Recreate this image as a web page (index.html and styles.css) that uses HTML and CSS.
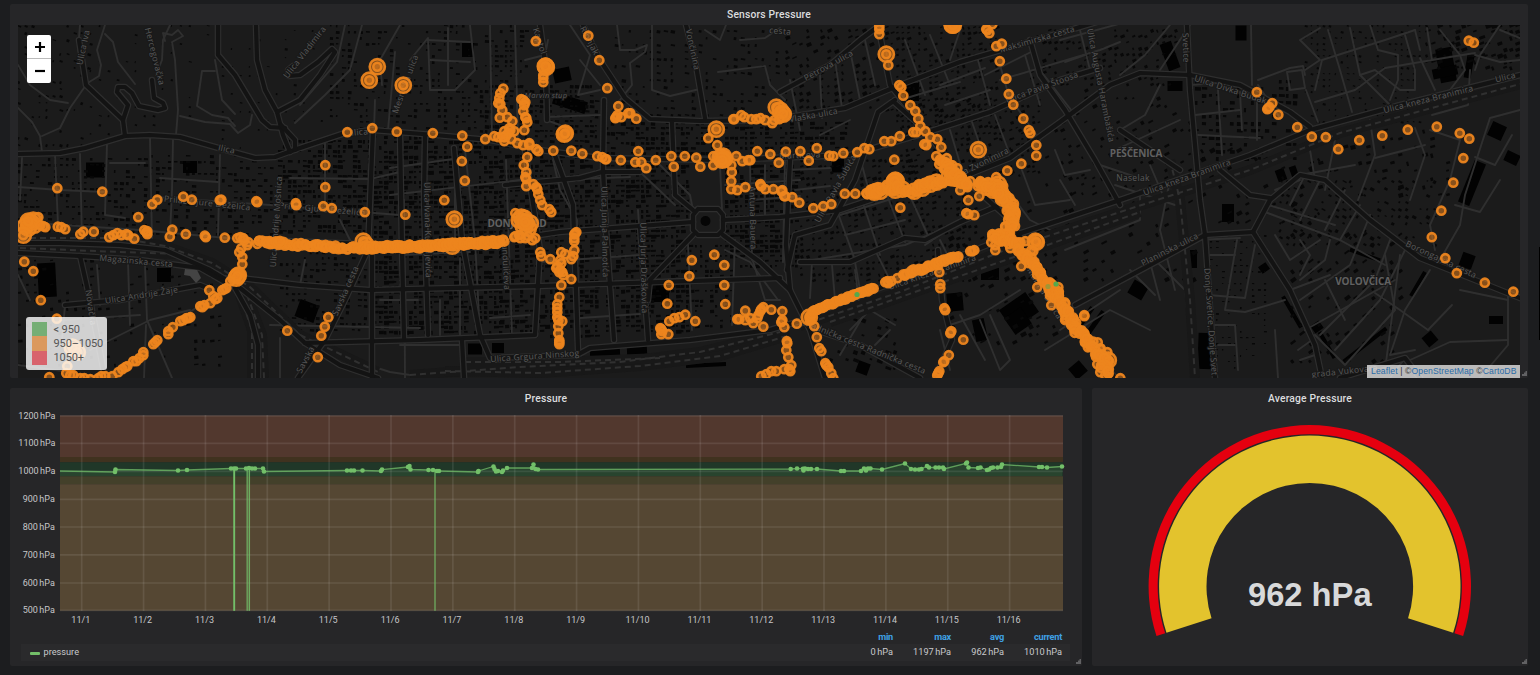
FILE: index.html
```html
<!DOCTYPE html>
<html lang="en">
<head>
<meta charset="utf-8">
<title>Sensors Pressure</title>
<link rel="stylesheet" href="styles.css">
</head>
<body>
<main class="dashboard">
  <section class="panel panel-map">
    <h2 class="panel-title">Sensors Pressure</h2>
    <div class="map">
      <svg class="map-canvas" id="map" viewBox="18 25 1502 353" width="1502" height="353"></svg>
      <div class="zoom"><span class="zoom-btn"><svg width="24" height="23" viewBox="0 0 24 23"><path d="M8 12h10M13 7v10" stroke="#000" stroke-width="2.2"/></svg></span><span class="zoom-btn"><svg width="24" height="23" viewBox="0 0 24 23"><path d="M8 12h10" stroke="#000" stroke-width="2.2"/></svg></span></div>
      <div class="map-legend">
        <div class="key"><i class="swatch low"></i>&lt; 950</div>
        <div class="key"><i class="swatch mid"></i>950–1050</div>
        <div class="key"><i class="swatch high"></i>1050+</div>
      </div>
      <div class="attribution"><a>Leaflet</a> | ©<a>OpenStreetMap</a> ©<a>CartoDB</a></div>
    </div>
    <svg class="grip" width="5" height="5"><path d="M0 5V3h2V1.500h1.500V0H5v5z"/></svg>
  </section>
  <div class="row">
    <section class="panel panel-graph">
      <h2 class="panel-title">Pressure</h2>
      <svg class="chart" id="chart" viewBox="10 408 1072 220" width="1072" height="220"></svg>
      <div class="legend">
        <div class="legend-head"><span class="name"></span><span class="c1">min</span><span class="c2">max</span><span class="c3">avg</span><span class="c4">current</span></div>
        <div class="legend-row"><span class="name"><i class="dash"></i>pressure</span><span class="c1">0 hPa</span><span class="c2">1197 hPa</span><span class="c3">962 hPa</span><span class="c4">1010 hPa</span></div>
      </div>
      <svg class="grip" width="5" height="5"><path d="M0 5V3h2V1.500h1.500V0H5v5z"/></svg>
    </section>
    <section class="panel panel-gauge">
      <h2 class="panel-title">Average Pressure</h2>
      <svg class="gauge" id="gauge" viewBox="1092 408 436 250" width="436" height="250"></svg>
      <svg class="grip" width="5" height="5"><path d="M0 5V3h2V1.500h1.500V0H5v5z"/></svg>
    </section>
  </div>
</main>
<div class="scroll-thumb"></div>
<script src="app.js"></script>
</body>
</html>
```

FILE: styles.css
```css
* { box-sizing: border-box; }
body {
  margin: 0;
  height: 675px;
  overflow: hidden;
  background: #1c1d1f;
  color: #d0d1d3;
  font-family: Roboto, "Liberation Sans", sans-serif;
}
.dashboard { padding: 4px 12px 0 10px; display: flex; flex-direction: column; gap: 10px; }
.row { display: grid; grid-template-columns: 1072px 436px; gap: 10px; }
.panel { position: relative; background: #262628; border-radius: 2px; }
.panel-map { height: 374px; padding: 0 8px; }
.panel-graph, .panel-gauge { height: 278px; }
.panel-title {
  margin: 0;
  height: 21px;
  line-height: 21px;
  font-size: 10.300px;
  font-weight: 500;
  letter-spacing: .18px;
  text-align: center;
  color: #dcdddf;
}
.panel-graph .panel-title, .panel-gauge .panel-title { height: 20px; }
.grip { position: absolute; right: 1px; bottom: 2px; fill: #616163; }

.map { position: relative; height: 353px; background: #1b1b1b; overflow: hidden; }
.map-canvas { display: block; }
.zoom {
  position: absolute;
  left: 9px;
  top: 10px;
  width: 24px;
  height: 48px;
  background: #fff;
  border-radius: 2px;
  display: flex;
  flex-direction: column;
}
.zoom-btn { height: 24px; }
.zoom-btn:first-child { border-bottom: 1px solid #bbb; }
.map-legend {
  position: absolute;
  left: 8px;
  bottom: 8px;
  width: 81px;
  height: 53px;
  padding: 5px 0 5px 6px;
  border-radius: 3px;
  background: rgba(255, 255, 255, .8);
  font-size: 11px;
  letter-spacing: -.1px;
  color: #555;
}
.key { display: flex; align-items: center; gap: 6.500px; height: 14.300px; white-space: nowrap; }
.swatch { flex: none; width: 15px; height: 14.300px; opacity: .7; }
.low { background: #4fa04f; }
.mid { background: #e0812c; }
.high { background: #dc3442; }
.attribution {
  position: absolute;
  right: 0;
  bottom: 0;
  width: 153px;
  height: 13px;
  line-height: 12px;
  padding-left: 4px;
  background: rgba(255, 255, 255, .7);
  color: #333;
  font-family: "Liberation Sans", sans-serif;
  font-size: 8.600px;
  letter-spacing: .12px;
  white-space: nowrap;
}
.attribution a { color: #2a6ba8; }
.road-casing, .road-core, .road-minor, .rail { fill: none; stroke-linejoin: round; stroke-linecap: round; }
.road-minor { stroke: #2f2f2f; stroke-width: 1.900; }
.road-casing { stroke: #2e2e2e; stroke-width: 6.600; }
.road-core { stroke: #131313; stroke-width: 4.200; }
.rail-bed { fill: none; stroke: #181818; stroke-width: 10; }
.rail { stroke: #303030; stroke-width: 2; stroke-dasharray: 6 4; stroke-linecap: butt; }
.building { fill: #080808; }
.block { fill: #020202; }
.street {
  font: 8.500px "Open Sans", "DejaVu Sans", sans-serif;
  letter-spacing: .3px;
  fill: #5a5a5a;
  stroke: #181818;
  stroke-width: 2;
  paint-order: stroke;
  text-anchor: middle;
}
.district { font-weight: 700; font-size: 10px; fill: #616161; letter-spacing: -.2px; }
.poi { font-style: italic; font-size: 7.500px; }
.sensor { fill: #ed851e; fill-opacity: .52; stroke: #ed851e; stroke-opacity: .94; stroke-width: 2.600; }
.sensor-low { fill: #55a84c; }

.chart, .gauge { display: block; }
.grid { stroke: #fff; stroke-opacity: .09; stroke-width: 1.700; }
.axis { font-size: 9px; fill: #c6c7c9; }
.axis-y { text-anchor: end; word-spacing: -.8px; }
.axis-x { text-anchor: middle; }
.series { fill: none; stroke: #73bf69; stroke-width: 1.300; stroke-opacity: .75; }
.series-area { fill: #73bf69; fill-opacity: .1; }
.point { fill: #73bf69; }
.legend { padding: 0 12px 0 11px; font-size: 9.200px; }
.legend-head, .legend-row { display: flex; text-align: right; padding-right: 8px; }
.legend-head { height: 16px; line-height: 17px; color: #3fa0e4; font-weight: 700; letter-spacing: -.25px; }
.legend-row { height: 17px; line-height: 16px; background: #2a2a2c; color: #c8c9cb; word-spacing: -.8px; }
.name { flex: 1; display: flex; align-items: center; gap: 3.500px; height: 15px; padding-left: 9px; text-align: left; }
.dash { width: 10px; height: 3px; margin-top: 3px; border-radius: 1px; background: #73bf69; }
.c1 { margin-right: 1px; }
.c2 { width: 57px; }
.c3 { width: 53px; }
.c4 { width: 58px; }
.gauge-value { font: 700 32.700px "Liberation Sans", sans-serif; fill: #d8d9da; text-anchor: middle; }
.scroll-thumb { position: absolute; right: 0; top: 247px; width: 1px; height: 93px; background: #000; }
```

FILE: app.js
```js
const el = (cls, tag, attrs, text) => {
  const a = Object.entries(attrs).map(([k, v]) => `${k}="${v}"`).join(' ');
  return `<${tag} class="${cls}" ${a}>${text || ''}</${tag}>`;
};
let seed = 7;
const rnd = () => (seed = (seed * 16807) % 2147483647) / 2147483647;

/* ---------- base map ---------- */
// x0, y0, x1, y1, rotation, grid step, density, building size
const quarters = [
  [18, 25, 90, 150, 20, 7, .35, 2.5], [90, 25, 215, 135, 15, 9, .3, 2], [222, 30, 330, 150, 10, 9, .3, 2],
  [330, 25, 480, 128, 3, 6, .4, 2.8], [480, 85, 600, 150, 5, 5, .6, 3.2], [485, 25, 530, 90, 3, 5, .5, 3],
  [615, 30, 780, 118, 10, 7, .4, 3],
  [18, 158, 150, 235, 2, 6, .5, 3], [150, 155, 272, 235, 2, 6, .5, 3.2], [278, 140, 372, 235, 2, 5, .6, 3.6],
  [374, 136, 500, 335, -2, 5, .68, 3.6], [500, 155, 600, 340, -3, 5, .65, 3.6], [606, 165, 690, 335, -3, 5, .65, 3.6],
  [725, 165, 800, 270, -2, 5, .6, 3.6], [690, 245, 735, 330, -3, 5, .4, 3],
  [606, 122, 720, 156, 4, 5, .6, 3.4], [725, 122, 850, 150, -3, 5, .6, 3.4],
  [18, 260, 220, 370, -8, 8, .3, 3], [280, 245, 370, 330, 5, 6, .5, 3],
  [785, 30, 880, 110, -25, 7, .55, 3.4], [885, 27, 1000, 130, -19, 5.5, .55, 2.8], [900, 100, 1040, 175, -19, 5.5, .45, 2.8],
  [1030, 30, 1180, 90, -22, 6, .5, 3], [1060, 90, 1190, 215, -28, 8, .35, 3.5], [800, 160, 980, 285, -19, 6, .6, 3],
  [940, 230, 1060, 350, -28, 8, .3, 4], [1000, 130, 1090, 220, -25, 9, .3, 3], [830, 310, 900, 370, 20, 8, .3, 4],
  [1065, 225, 1200, 280, -28, 9, .35, 4], [1195, 80, 1300, 160, 2, 7, .5, 4], [1305, 25, 1420, 125, 15, 6, .45, 2],
  [1425, 25, 1520, 70, -20, 6, .5, 4], [1200, 150, 1320, 230, -28, 9, .35, 4], [1210, 235, 1270, 370, 2, 6, .4, 2],
  [1280, 180, 1440, 250, 28, 7, .5, 3], [1290, 235, 1400, 370, -36, 9, .45, 4], [1310, 130, 1450, 200, -15, 8, .35, 4],
];
let buildings = '';
for (const [x0, y0, x1, y1, rot, step, density, size] of quarters) {
  for (let y = y0; y < y1; y += step) {
    for (let x = x0; x < x1; x += step) {
      if (rnd() > density) continue;
      const w = size * (.5 + rnd()), h = size * (.4 + rnd() * .7);
      buildings += el('building', 'rect', { x: x.toFixed(1), y: y.toFixed(1), width: w.toFixed(1), height: h.toFixed(1), transform: `rotate(${rot} ${x} ${y})` });
    }
  }
}
// cx, cy, w, h, rotation
const blocks = [
  [47, 280, 18, 34, -3], [164, 275, 14, 14, 0], [307, 311, 20, 18, 20], [1241, 33, 11, 15, 0], [1170, 56, 12, 28, -20],
  [1175, 86, 15, 10, 0], [1019, 311, 32, 24, -35], [1018, 321, 20, 20, -35], [955, 302, 16, 18, -5], [980, 330, 12, 22, -12],
  [1078, 370, 14, 14, -40], [1138, 290, 16, 15, 30], [605, 353, 30, 9, -3], [637, 351, 20, 10, -3], [475, 349, 14, 11, 0],
  [498, 348, 12, 10, 0], [706, 365, 40, 4, -3], [660, 292, 18, 20, 0], [190, 167, 14, 12, 0], [95, 170, 18, 15, 0],
  [468, 50, 12, 14, 0], [562, 75, 17, 14, -12], [570, 103, 34, 12, 18], [1228, 213, 12, 18, 0], [1190, 259, 14, 18, 0],
  [1472, 183, 12, 45, 22], [1497, 131, 15, 15, 25], [1512, 158, 14, 11, 25], [1467, 261, 13, 15, 20], [1496, 320, 14, 8, 0],
  [1430, 339, 12, 12, -40], [1281, 175, 9, 12, -20], [1294, 172, 7, 12, -20], [1205, 351, 14, 36, 2], [1446, 65, 16, 34, -10],
  [1445, 72, 25, 10, -12], [1469, 67, 7, 22, 10], [1264, 268, 9, 8, -35], [1317, 327, 10, 9, -35], [990, 274, 18, 12, 0],
  [1085, 318, 5, 26, 35], [1096, 322, 5, 26, 35], [863, 368, 12, 12, 20], [912, 92, 14, 18, 0], [838, 165, 12, 15, 0],
  [1365, 345, 54, 4, -38], [1365, 255, 32, 4, 20], [1292, 312, 4, 36, -30], [1327, 345, 4, 30, -30], [1418, 284, 4, 28, 30],
];
let blockShapes = blocks.map(([x, y, w, h, r]) => el('block', 'rect', { x: x - w / 2, y: y - h / 2, width: w, height: h, transform: `rotate(${r} ${x} ${y})` })).join('');

const minor = [
  '18,108 32,122 40,136 42,152', '42,136 60,128 70,108 86,85', '86,84 99,76 101,65 97,50 105,25', '18,65 30,85 50,100 68,103',
  '80,25 78,50 81,60', '105,34 113,42 118,62 135,84', '170,25 163,40 162,60 156,75', '165,41 163,33 172,35 178,30 183,36 172,42 175,60 178,110 176,135',
  '180,116 205,122 230,124 238,133 250,125 252,115', '215,71 202,71 197,106 212,115 228,118 235,126', '215,60 222,100 235,114',
  '295,123 325,95 350,70 362,25', '345,25 337,62 300,105', '22,158 20,200', '55,155 58,225', '80,154 82,240', '107,143 105,215 125,218',
  '18,187 60,190 105,192', '18,222 140,230 270,242', '150,137 152,240', '173,140 172,190 170,235', '220,155 218,235', '325,140 325,205',
  '160,178 218,182', '155,197 270,205 400,215', '290,178 370,179 400,172', '110,163 145,163', '65,305 62,340', '97,265 100,305', '128,262 130,325',
  '145,265 147,320 172,378', '62,320 140,315', '90,350 150,320 190,310', '146,325 144,378', '190,312 240,278', '375,100 373,160', '395,52 388,130',
  '382,85 380,60 400,25', '410,60 428,38 430,90 455,90 475,70 470,25', '427,40 470,42', '448,28 448,85', '430,60 470,62', '490,25 492,140', '515,25 518,140',
  '525,60 545,55 548,40', '545,85 546,120 560,125', '545,117 600,115', '570,25 590,55 578,95 600,90', '580,60 600,85', '617,25 620,50 635,50 647,45 645,52 630,63 632,85 620,100',
  '652,25 652,90 670,96 700,89', '705,30 720,40 726,25', '718,72 765,66 770,85 785,100', '740,40 765,38 780,28', '455,150 455,240', '465,150 475,240 480,335',
  '506,160 512,335', '390,168 460,158', '390,195 520,180', '404,200 405,378', '428,200 428,335', '390,250 535,235', '540,180 630,177', '553,160 560,190 577,220 578,345', '605,170 614,340',
  '638,210 647,340', '560,232 640,224', '540,262 640,255', '580,318 640,314', '400,255 470,252', '460,258 460,335', '490,318 530,315', '660,165 690,195 693,210',
  '640,172 675,205', '688,245 692,330', '660,280 730,278', '735,240 732,325', '750,160 752,260', '765,165 765,220', '720,165 722,210', '725,185 800,180', '753,200 800,196',
  '785,160 783,262', '725,250 750,262 778,300', '752,258 765,300 780,300', '820,75 822,118', '790,80 800,130', '835,60 842,108', '850,50 860,100', '865,40 875,85', '905,40 925,95', '930,35 948,80',
  '950,60 960,30', '978,60 990,105', '940,85 985,68', '945,105 990,90', '985,75 1035,50', '1000,80 1100,50 1120,42', '1000,65 1010,100', '1025,55 1040,105', '1040,70 1075,115', '900,100 960,82',
  '935,130 990,112', '950,130 965,180', '972,122 988,168', '995,115 1010,155', '1015,105 1040,140', '1080,30 1090,70', '1060,40 1170,10', '1065,62 1085,55', '820,135 850,120', '825,160 880,145',
  '790,170 830,168', '795,190 830,186', '840,215 920,190', '862,165 870,195', '845,235 905,220', '835,205 855,260', '862,200 880,255', '885,190 905,242', '905,185 930,240', '800,262 905,245 1000,205',
  '812,262 810,298', '832,265 835,300', '855,262 860,290', '875,250 890,280', '940,240 955,270', '925,245 955,225', '960,215 985,210', '1000,180 1030,220 1050,230', '1020,165 1035,205 1070,200', '1055,150 1065,175 1090,170',
  '1060,180 1075,205', '950,325 980,315 1020,290', '960,315 985,360', '980,320 1000,370 1010,360 990,315', '940,330 950,370', '850,330 870,310 895,325', '840,355 862,318', '875,345 890,330', '860,310 855,270',
  '1060,330 1120,290', '1045,350 1110,310 1150,330', '1130,270 1155,295', '1150,262 1160,300', '1170,25 1145,55 1120,75', '1190,25 1160,70', '1120,130 1145,115 1160,85', '1115,150 1180,120', '1100,165 1145,180', '1150,165 1165,200', '1115,185 1175,205',
  '1065,250 1140,220 1140,190', '1190,85 1230,82', '1195,115 1240,110', '1198,135 1260,138', '1218,90 1222,155', '1240,92 1242,130', '1257,97 1257,140', '1252,85 1251,25', '1258,80 1290,68 1303,66 1305,75',
  '1287,72 1302,70 1305,88 1290,90 1287,72', '1258,85 1280,118', '1305,70 1320,60 1300,40 1320,28', '1306,90 1318,122', '1315,90 1322,60 1385,40 1415,30', '1328,30 1340,70 1352,112', '1350,28 1360,75 1390,105', '1370,25 1378,50 1398,55 1398,80 1390,100', '1405,35 1415,70 1415,90 1400,90 1375,70 1360,75',
  '1315,102 1355,90 1385,68 1450,57 1475,53', '1427,28 1432,60', '1440,30 1460,55 1465,70 1450,90', '1415,30 1420,50', '1420,58 1435,90', '1500,25 1480,55 1475,70', '1475,55 1500,62 1520,60', '1500,30 1520,38',
  '1310,150 1315,180', '1335,140 1325,190', '1370,120 1375,155 1358,200', '1355,165 1300,175', '1375,158 1425,145', '1415,128 1425,155 1410,200', '1432,115 1468,105 1470,70', '1430,130 1460,140 1450,180 1430,225 1435,250', '1520,110 1490,118 1465,195 1460,225 1440,260',
  '1475,157 1495,165 1512,135', '1455,205 1480,212 1500,180', '1300,180 1275,190', '1265,212 1340,240 1385,265', '1268,205 1335,225', '1305,175 1290,205', '1320,180 1300,220', '1345,190 1325,230', '1360,205 1340,240', '1370,215 1350,265 1300,300', '1390,240 1375,280 1320,335',
  '1405,250 1380,300 1335,350', '1300,240 1310,255 1300,275', '1275,235 1290,260 1320,240', '1330,240 1325,260 1300,280', '1290,290 1330,275', '1305,330 1395,280', '1315,335 1345,365 1395,310', '1325,280 1345,320', '1375,293 1400,310 1428,330 1452,305', '1385,255 1395,310',
  '1400,255 1385,370', '1430,270 1405,310 1390,355 1415,350', '1508,295 1508,345 1480,378', '1410,360 1450,342 1508,340', '1390,378 1405,358 1415,370', '1195,240 1240,238', '1210,255 1235,255', '1208,295 1245,298 1255,245', '1237,240 1225,310 1245,312',
  '1245,312 1285,300', '1215,325 1235,325 1238,370', '1218,345 1235,345', '1298,350 1312,340', '1300,360 1315,355', '1275,330 1278,378', '1155,260 1185,290 1190,340', '1170,180 1160,230 1175,290', '18,365 70,372', '270,325 420,328', '18,275 30,300',
  '400,345 460,345', '280,338 280,378', '305,345 390,372 430,378', '305,260 300,285', '340,220 355,250', '380,300 418,300', '440,300 440,335', '1460,290 1508,300',
];
const major = [
  '18,154 60,153 85,148 125,136 150,135 180,137 215,147 255,158 275,157 300,148 345,133 372,130 435,135 490,140 540,150 600,158 720,160 850,155 925,133 990,112 1060,80 1100,68',
  '218,25 218,55 235,75 262,120 270,127 285,128', '256,25 257,60 265,90 277,112 283,135 290,152', '277,112 300,100 320,75 335,52 332,49 318,62 300,75 289,76 288,70 293,66', '281,125 295,140 295,150',
  '79,40 86,85 123,120 128,105 117,92 118,87 125,87 132,93 139,106 158,110 165,108 163,103 154,98 152,80', '123,120 125,136',
  '18,243 60,243 120,245 165,250 210,270 240,288 280,320 305,343 340,365 378,378', '18,253 80,256 140,260 200,268 230,285',
  '240,278 300,285 370,290 540,286 780,278', '65,305 120,300 200,285 212,290', '80,256 90,300 105,378', '235,288 250,315 258,345 258,378', '373,130 368,250 345,300 325,340 298,378',
  '305,343 420,340 535,335 540,250 525,150', '260,240 420,246 520,238 560,232 640,226 693,222', '425,135 424,200 428,335', '400,135 402,250 404,338', '454,148 462,240 480,335', '505,185 580,178 602,172 640,172', '553,150 573,205 578,350', '604,100 603,170 606,230 614,340', '640,226 648,340',
  '480,335 490,358 577,355 590,348 690,340 770,330 810,318', '372,250 372,378', '462,340 464,378', '583,25 600,60 625,98 650,119 700,121 770,120 845,108 900,85 960,62 1060,33 1130,12', '540,25 546,70 547,120', '686,25 695,60 705,118', '672,122 675,195 693,210',
  '698,209 718,209 723,215 723,230 718,235 698,235 693,230 693,215 698,209', '693,235 650,280 648,300', '723,235 760,262 790,290', '723,220 780,217 840,210 900,190 960,178 1010,158 1060,122 1110,85 1140,73 1190,75',
  '780,92 830,65 860,40 880,25', '1030,40 1040,75 1065,110 1095,160 1120,205', '787,270 795,235 830,225 855,180 878,112 895,100', '878,25 890,85 930,135 960,180', '790,160 788,200 786,245 790,290 810,330 825,378',
  '800,262 850,262 905,238 925,240 960,222 1000,205', '895,103 925,130 960,175 1010,220 1040,270 1075,325 1115,378', '810,315 900,280 1000,240 1120,200 1250,155 1310,130 1400,105 1520,75', '1187,25 1190,90 1200,200 1205,235 1215,378',
  '1190,75 1240,85 1290,112 1310,127', '1075,305 1150,265 1205,235 1253,232', '1253,232 1270,200 1300,175 1325,180 1370,220 1420,258 1500,290 1520,298', '1253,232 1290,290 1315,345 1322,378', '810,328 860,345 920,378', '938,250 942,300 952,340 935,378', '1220,170 1250,195 1270,198', '1340,378 1405,358 1420,378', '1120,130 1180,170',
];
const rails = ['20,238 120,238 165,246 212,263 250,287 300,335 378,372', '20,248 120,252 180,254 230,278', '800,326 900,292 1000,252 1120,212 1250,170 1340,133 1520,84', '830,322 1000,262 1140,212', '410,375 520,367 620,362 700,352 780,332', '445,371 540,373 640,366 720,356 790,335', '465,362 560,362 660,358', '240,295 252,330 252,378', '247,295 262,335 264,378', '1170,160 1180,200 1190,300 1195,378'];
const line = (cls, pts) => el(cls, 'polyline', { points: pts });

const labels = [
  ['Ilica', 226, 152, 12], ['Ilica', 360, 135, -5], ['Ulica Iva', 86, 48, -78], ['Hercegovačka', 152, 57, 76], ['Ulica Vladimira', 307, 54, -52], ['Mesnička ulica', 408, 85, -70],
  ['Magazinska cesta', 136, 264, 5], ['Ulica Andrije Žaje', 142, 298, -9], ['Prilaz Gjure Deželića', 207, 206, 6], ['Prilaz Gjure Deželića', 322, 212, 5], ['Ulica Andrije Mošnica', 279, 222, -86],
  ['Savska cesta', 348, 292, -66], ['Savska', 308, 361, -62], ['Novačka', 88, 308, 82], ['Kaptol', 537, 42, 72], ['Ribnjak', 587, 42, 62], ['Vončinina', 690, 50, 78], ['cesta', 780, 34, 5],
  ['Petrova ulica', 830, 68, -29], ['Vlaška ulica', 814, 118, -10], ['Maksimirska cesta', 1038, 42, -16], ['Ulica Pavla Štoosa', 1043, 90, -20], ['Ulica Augusta Harambašića', 1098, 86, 79], ['Kneza Zvonimira', 978, 168, -26],
  ['Ulica Pavla Šubića', 838, 190, -61], ['Ulica kneza Branimira', 1188, 180, -20], ['Ulica kneza Branimira', 933, 275, -19], ['Ulica kneza Branimira', 1429, 102, -14], ['Ulica Divka Budaka', 1232, 93, 18], ['Svetice', 1183, 48, 88], ['Planinska ulica', 1171, 252, -27],
  ['Borongajska cesta', 1440, 262, 25], ['Donje Svetice, Donje Svet', 1208, 322, 86], ['Radnička cesta Radnička cesta', 865, 350, 22], ['Ulica', 1506, 80, -14], ['grada Vukovara', 1345, 374, -6],
  ['Ulica Junija Palmotića', 602, 232, 89], ['Ulica Jurja Draškovića', 641, 268, 89], ['Gundulićeva', 503, 264, 87], ['Ulica Ivana Kukuljevića', 425, 230, 89], ['Antuna Bauera', 750, 218, 89], ['Ulica Grgura Ninskog', 535, 359, -4], ['Ulica Marina Držića', 1036, 285, 58],
  ['Martićeva', 800, 158, -2], ['Naselak', 1133, 181, 0],
];
let map = blockShapes + buildings;
map += minor.map(p => line('road-minor', p)).join('');
map += rails.map(p => line('rail-bed', p)).join('') + rails.map(p => line('rail', p)).join('');
map += major.map(p => line('road-casing', p)).join('') + major.map(p => line('road-core', p)).join('');
map += '<circle cx="705.500" cy="221" r="5" fill="#050505"/><path d="M185 269l12 1 4 8-5 5-6-7-6-1z" fill="#444"/>';
map += labels.map(([t, x, y, r]) => el('street', 'text', { x, y, transform: `rotate(${r} ${x} ${y})` }, t)).join('');
map += [['PEŠČENICA', 1136, 157], ['VOLOVČICA', 1363, 284.5], ['DONJI GRAD', 517, 227]].map(([t, x, y]) => el('street district', 'text', { x, y }, t)).join('');
map += el('street poi', 'text', { x: 546, y: 98 }, 'Marvin stup');

/* ---------- sensors ---------- */
const small = `347,132 372,128 396.500,131.500 325,165 325,187 57,188 102,191.500 157,199.500 152,204 183,196.500 191.500,199.500 219.500,200 221,199.500 256,201 257,202 295.500,203 296,205 323,206 331.500,208 364.500,212 138,217
38,217 43,226 45,227 40,225 57.500,226.500 61,227 65,229 80,234 83,231.500 93.500,231.500 109,237 113,235 117,233 121,235 126,234 128,235 134,238.500 144,230 147,231 147,234 146,232 172,229.500 169.500,236.500 185.500,234 204.500,235.500 205.500,237 224.500,237.500 237,238 240,237 244,240 248,242 247,245 243,238
241,248 239,252 242,257 242,264 230,281 224,289 222,290 226,288 209,290 213,296 215,299 210,303 217,298 202,307 200,306 204,305 190,317 186,318 183,320 188,318 180,321 172.500,327 168,334 168,331 157,340 153,344 155,342 143,355 139,358 143,352 136,361 133,361 127,366 125,367 122,369 118,372 112,376 105,376 101,376 98,378 90,379 84,378 80,378 70,375 66,373 73,375 49,377
24,261.500 33,271 40.500,300 56.500,318.500 67,366 287,330.500 317.500,357 321,335.500 324.500,326.500 328,317
535.500,41 588,35.500 599,60 607,88 618,106 616,117 617,115 615,118 621,117 628,113 630,113 636,118.500 543,78 543,82 543,75 503,88.500 500,93 499,98 500,104 502,110 499.500,117.500 507,117 512,121 498,103 509,128 514,131 504,131 521,99 523,100 525,102 524,105 523,111 526,118 527,122 525,117 524,130 485,139 494,136 498,137 505,137 511,139 517,143 523,145 529,145 536,149 538,151 504,141 508,133 506,135 510,130 503,137 529,143
432.500,133 462,135.500 467,146.500 461.500,161 464.500,180.500 444,200 527,157 523.500,165 526,172 526,179 526,186 533,184 525,177 537,189 538,194 540,200 542,205 549,209 551,212 536,187
553,150.500 571,150.500 582,153.500 597,156 602,157 605,159 606,159 620.500,160 638,151 635,162 641,162 646,168 655.500,160 671,156 673.500,166.500 684.500,156 696,157.500 700,166.500 713,156 713,165 708,138 717,145 736,156 742,161 750,160 748,160 757,151 770,154 785.500,151.500 778.500,162.500 731,165 731.500,172 731,181 731,189 737,190 745,187 760,184 761,186 765,189 773,189 781,191 785,196
734,119 733,119 741,115 744,117 751,119 756,119 760,118 765,120 772,123 774,120 779,119 405,214.500 515,213 515,236 520,238 525,238 532,240 535,238 514,237 519,235 528,236 540,252 541,256 550,259 561,252 565,254 574,250 573,256 571,259 574,234 576,232 575,233 574,241 574,238 560,260 557,266 559,272 561,263 560,270 556,268 563,275 562,272 571,279 561,285 559,297 557,304 557,312 558,320 558,326 562,321 557,308 557,317 558,333 559,340 559,344 559,342
691.500,260 689,276 714,254.500 724,265 724,285 725,304 668.500,285 667,303.500 685,314.500 679,317 674,318 669,321 695,321 661,329 660,328 662,331 661,334 668,334 739,319 745,320 745,310.500 737,319 750,318 753,323 757,318 758,315 760,311 763,307 761,309 771,309.500 782,311 782,320 784,327 781,322 763,326.500 786.500,341 786,350 788,357 791,365 789,369 784,369 776,371 771,371 766,374 761,376 787,343 790,371
879,29 879,34 888,65 986,29 989,33 987,30 992,24 879,26 1001.500,43.500 996,46 999.500,61 1006,78.500 1008.500,94 1013,104.500 1023,118.500 1028.500,130 1030,133 1036,145 1036,155.500 1021,163.500 1007,170.500 996,177 899,85 901,87 903,95.500 910,105 915,111 918,118.500 920,126 925,131 930,137 937,139 941,147 936,156 946.500,158 939,164 913,132 916,132 899.500,136 891,141 884,141 924,144 926,145 869,149 864,148 857,152 843,153 833,156 829,155.500 816.500,148 808.500,160.500 800,151 894,159.500
844.500,193.500 855,193.500 866,193 870,193 949,164 951,168 955,172 962,178 966,182 970,181 980,181 981,184 960,190 968,200 979,196 945,168 952,165 957,168 782,190 792,197 799,202.500 784,196 813,208 823,206 831,204 900,207.500 968,214 974,215 966,213 967,187
992,234 997,238 1002,240 1010,240 991,242 995,245 995,250 1010,248 1018,248 1025,241 1031,250 1033,251 1022,254 1026,260 1021,266 1033,265 1038,270 1042,278 1036,269 1040,272 1037,287 1047,285 1058,287 1056,295 1051,305 1058,298 1084,316 1084,315 1097,364 1100,372 1105,375 1108,373 1120,378 1107,352 1037,267 1044,282 1050,291
939,272 940,284 940,288 944,308 945,310 951,331 950,333 963,339.500 948.500,355 943,362 944,361 939,371 937,375 938,373 814,326 816.500,337 819,348 821,351 825,363 828,367 826,365 831,373 833,378 796.500,323.500 885,282 887,281 891,281 897,278 888,283 970,251 974,250 972,251
1256.500,92 1272,103 1268,108 1267,109 1269,107 1278,114.500 1297,127 1311.500,136.500 1325.500,137 1338,149 1359,140 1382,135.500 1407.500,129.500 1436.500,126.500 1459.500,133 1469,138.500 1463,158 1453,182.500 1468.500,40.500 1473.500,42.500 1441,210.500 1431.500,237 1445,258 1456.500,273 1484.500,282.500 1513,291.500`;
const large = `377,66.500 369,80 403,85 25,226 30,222 34,225 28,228 33,220 28,221 23,235 238,275 236,278 237,276 72,347 77,352 363,241 545.500,66 546,67 545,66 564,134 565,133 722,158 723,156 720,157 724,159 722,160 716,129 776,107 782,113 780,110 783,114 454,219 521,217 524,222 530,223 523,226 519,220 528,228 524,218 886,54 952,25 952,24 953,25 978,149.500 895,180 896,181 894,181 874,192 880,191 895,190 902,189 914,191 922,188 930,184 936,182 952,177 949,177 954,178 958,178 990,187 998,184 1000,192 996,189 1003,198 993,190 809,317 1035,241 1036,242 1108,360 525,222 366,245 452,246 1000,237`;
// dense tracks: path vertices, sample spacing, scatter
const tracks = [
  [[[257, 242], [275, 243], [305, 245], [325, 246], [350, 248], [400, 247], [430, 246], [460, 244], [490, 243], [504, 241]], 2, 3.6],
  [[[265, 242], [282, 242]], 2, 3],
  [[[370, 247], [430, 246], [503, 241]], 1.6, 4],
  [[[809, 320], [812, 312], [825, 306], [845, 298], [876, 287]], 2, 2],
  [[[903, 276], [912, 271], [930, 266], [940, 262], [950, 258], [960, 256]], 2, 3],
  [[[868, 193], [890, 187], [912, 190], [925, 185], [940, 180], [962, 180]], 2.2, 7],
  [[[998, 185], [1005, 198], [1010, 208], [1012, 220], [1008, 230], [1002, 238]], .9, 9],
  [[[992, 236], [1015, 242], [1022, 252], [1032, 262], [1044, 278], [1053, 290]], 1.7, 7],
  [[[940, 160], [955, 176], [968, 184]], 1.5, 6],
  [[[1050, 288], [1060, 300], [1066, 308], [1070, 322], [1082, 333], [1092, 345], [1104, 360], [1105, 373]], 1.1, 9],
  [[[980, 182], [995, 190], [1004, 196]], 1.5, 9],
];
const parse = s => s.trim().split(/\s+/).map(p => p.split(',').map(Number));
const dots = [];
for (const [x, y] of parse(large)) dots.push([x, y, 7.6], [x, y, 4]);
for (const [x, y] of parse(small)) dots.push([x, y, 4.1]);
for (const [pts, step, j] of tracks) {
  for (let i = 1; i < pts.length; i++) {
    const [ax, ay] = pts[i - 1], [bx, by] = pts[i], n = Math.ceil(Math.hypot(bx - ax, by - ay) / step);
    for (let k = 0; k < n; k++) dots.push([ax + (bx - ax) * k / n + (rnd() - .5) * j, ay + (by - ay) * k / n + (rnd() - .5) * j, 4.1]);
  }
}
map += dots.map(([x, y, r]) => el('sensor', 'circle', { cx: (x + .3).toFixed(1), cy: (y + .2).toFixed(1), r })).join('');
map += [[857, 294.500], [1048, 286.500], [1056, 284]].map(([x, y], i) => el('sensor-low', 'circle', { cx: x, cy: y, r: 2.6, opacity: i === 1 ? .5 : 1 })).join('');
document.getElementById('map').innerHTML = map;

/* ---------- pressure graph ---------- */
const bands = [[415.500, 41.500, '#52382e'], [457, 5.300, '#40321f'], [462.300, 14, '#203728'], [476.300, 7.900, '#43402a'], [484.200, 126.500, '#554733']];
let chart = bands.map(([y, h, fill]) => el('band', 'rect', { x: 60, y, width: 1003, height: h, fill })).join('');
const yTicks = [415.8, 443.4, 471.3, 499.3, 527, 554.8, 583, 610.3];
yTicks.forEach((y, i) => {
  chart += el('grid', 'line', { x1: 60, x2: 1063, y1: y, y2: y });
  chart += el('axis axis-y', 'text', { x: i < 3 ? 55.5 : 54.8, y: y + 2.9 }, `${1200 - i * 100} hPa`);
});
for (let d = 1; d <= 16; d++) {
  const x = 81.700 + (d - 1) * 61.860;
  chart += el('grid', 'line', { x1: x, x2: x, y1: 415, y2: 611 });
  chart += el('axis axis-x', 'text', { x: x - .9, y: 623 }, `11/${d}`);
}
const readings = parse(`115,472 115.500,469.500 178,470.500 187,470 231,468.500 234,468.500 236,468.500 246,468.500 249,468 252,468.500 255,468.500 263,468.500 264,471.500 347,470.500 351,470.500 354,470.500 362.500,470.500 381,471 382,469.500 408,467 409.500,466 410.500,469.500 428.500,470 433,470 437,471 439,471 478,472 478.500,471 493.500,466.500 494.500,469 496,471.500 498,471 502,472 503,470.500 507,468 532,468 533.500,464.500 535.500,469 538,469.500
790.700,469 797,468.500 803,468.700 803.500,470.500 805,468.500 808,469 811,469 817,469 841,471 844,471 861,471 864,468.500 866,470.500 868,468.500 870.500,468.500 882,469.500 905,463.500 911,469 915,469.500 919,469.500 921.500,469 927,466 929,467.500 935.500,467.500 939,467.500 943,467.500 944,469 966,463.500 967,462.500 968.500,467.500 978,468 980.500,467.500 987,470 989,469.500 991,468 993,467.500 997.500,467.500 1001,467 1002,464.500 1039,467 1042,467 1047,467.500 1062,466.500`);
const path = [[60, 471], ...readings].map(p => p.join(' ')).join('L');
chart += el('series-area', 'path', { d: `M${path}V476.300H60Z` });
chart += el('series', 'path', { d: `M${path}` });
for (const [x, w, o] of [[234.200, 1.900, 1], [247.200, 1.500, .75], [249.300, 1.500, .85], [435, 1.700, .65]]) {
  chart += el('spike', 'rect', { x: x - w / 2, y: 469, width: w, height: 141.800, fill: '#73bf69', opacity: o });
}
chart += readings.map(([x, y]) => el('point', 'circle', { cx: x, cy: y, r: 2.3 })).join('');
document.getElementById('chart').innerHTML = chart;

/* ---------- gauge ---------- */
const arc = (outer, inner, fill) => {
  const cx = 1309.800, cy = 586.300, c = Math.cos(Math.PI / 10), s = Math.sin(Math.PI / 10);
  const d = `M${cx - outer * c} ${cy + outer * s}A${outer} ${outer} 0 1 1 ${cx + outer * c} ${cy + outer * s}L${cx + inner * c} ${cy + inner * s}A${inner} ${inner} 0 1 0 ${cx - inner * c} ${cy + inner * s}Z`;
  return el('arc', 'path', { d, fill });
};
document.getElementById('gauge').innerHTML = arc(161.200, 152.100, '#e5000f') + arc(150.700, 103.300, '#e3c32d') + el('gauge-value', 'text', { x: 1309.800, y: 605.800 }, '962 hPa');
```
